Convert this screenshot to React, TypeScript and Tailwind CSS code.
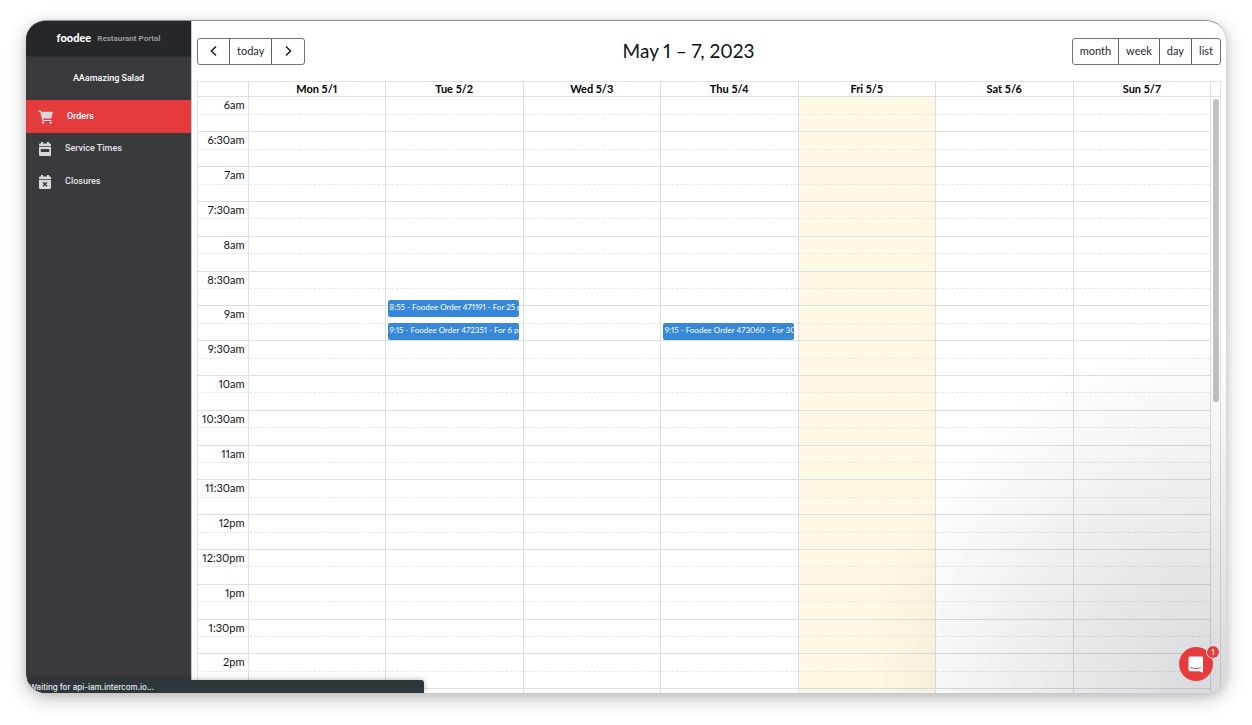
import { Fragment } from "react";

type CalendarEvent = { day: number; start: number; title: string };

const DAYS = ["Mon 5/1", "Tue 5/2", "Wed 5/3", "Thu 5/4", "Fri 5/5", "Sat 5/6", "Sun 5/7"];
const TODAY = 4;
const FIRST_MINUTE = 6 * 60;
const HALF_HOURS = 34;

const EVENTS: CalendarEvent[] = [
  { day: 1, start: 8 * 60 + 55, title: "8:55 - Foodee Order 471191 - For 25 people" },
  { day: 1, start: 9 * 60 + 15, title: "9:15 - Foodee Order 472351 - For 6 people" },
  { day: 3, start: 9 * 60 + 15, title: "9:15 - Foodee Order 473060 - For 30 people" },
];

// Five quarter-hour slots take 87px, so slot heights cycle between 17 and 18.
const SLOT_HEIGHTS = ["h-[17px]", "h-[17px]", "h-[18px]", "h-[17px]", "h-[18px]"];

const minuteToTop = (minute: number) => Math.round(((minute - FIRST_MINUTE) / 75) * 87);

function timeLabel(minute: number) {
  const hour = Math.floor(minute / 60);
  const rest = minute % 60;
  const suffix = hour < 12 ? "am" : "pm";
  return `${hour % 12 || 12}${rest ? `:${rest}` : ""}${suffix}`;
}

function CartIcon() {
  return (
    <svg viewBox="0 0 15 14" className="h-[14px] w-[15px] fill-[#d8d8dc]" aria-hidden="true">
      <path d="M0 .5h3l.5 1.200H15L13.200 8.600H5.100l.4 1.300h8v1.200H4.500L2.100 1.700H0z" />
      <circle cx="5" cy="12.600" r="1.200" />
      <circle cx="12.600" cy="12.600" r="1.200" />
    </svg>
  );
}

function CalendarBarIcon() {
  return (
    <svg viewBox="0 0 24 28" className="h-[14px] w-3" aria-hidden="true">
      <path fill="#d8d8dc" d="M4 0h4v3h8V0h4v3h2a2 2 0 0 1 2 2v3.500H0V5a2 2 0 0 1 2-2h2z" />
      <path
        fill="#d8d8dc"
        fillRule="evenodd"
        d="M0 10h24v15.500a2.500 2.500 0 0 1-2.500 2.500h-19A2.500 2.500 0 0 1 0 25.500zM3.500 14v6h17v-6z"
      />
    </svg>
  );
}

function CalendarCrossIcon() {
  return (
    <svg viewBox="0 0 24 28" className="h-[14px] w-3" aria-hidden="true">
      <path fill="#d8d8dc" d="M4 0h4v3h8V0h4v3h2a2 2 0 0 1 2 2v3.500H0V5a2 2 0 0 1 2-2h2z" />
      <path fill="#d8d8dc" d="M0 10h24v15.500a2.500 2.500 0 0 1-2.500 2.500h-19A2.500 2.500 0 0 1 0 25.500z" />
      <path d="m8 14.500 8 8m0-8-8 8" stroke="#3a393e" strokeWidth="2.800" fill="none" />
    </svg>
  );
}

function Chevron({ d }: { d: string }) {
  return (
    <svg viewBox="0 0 12 12" className="size-3 fill-none stroke-[#23282f] stroke-[1.6]" aria-hidden="true">
      <path d={d} />
    </svg>
  );
}

function Sidebar() {
  return (
    <aside className="flex w-[165px] shrink-0 flex-col bg-[#3a393e] font-['Roboto',sans-serif] text-[9px] font-medium text-[#e4e4e7]">
      <div className="flex h-9 items-center justify-center gap-1.5 border-b border-[#303136] bg-[#25272a]">
        <span className="font-['Lato',sans-serif] text-[11px] font-black text-white">foodee</span>
        <span className="text-[8px] font-bold text-[#97999d]">Restaurant Portal</span>
      </div>
      <div className="flex h-[43px] items-center justify-center text-white">AAamazing Salad</div>
      <nav>
        <a href="#orders" className="flex h-[33px] items-center gap-3.5 bg-[#e53b3d] px-3 text-white">
          <CartIcon />
          Orders
        </a>
        <a href="#service-times" className="flex h-8 items-center gap-3.5 px-[13px]">
          <CalendarBarIcon />
          Service Times
        </a>
        <a href="#closures" className="flex h-[33px] items-center gap-3.5 px-[13px]">
          <CalendarCrossIcon />
          Closures
        </a>
      </nav>
    </aside>
  );
}

function Toolbar() {
  const group =
    "flex h-[27px] divide-x divide-[#5d616b] overflow-hidden rounded-[3px] border border-[#6f737e] text-[11px] text-[#23282f]";
  return (
    <header className="flex items-center justify-between">
      <div className={group}>
        <button type="button" aria-label="Previous week" className="flex w-8 items-center justify-center">
          <Chevron d="M8 1.500 3.500 6 8 10.500" />
        </button>
        <button type="button" className="px-[7px]">
          today
        </button>
        <button type="button" aria-label="Next week" className="flex w-8 items-center justify-center">
          <Chevron d="M4 1.500 8.500 6 4 10.500" />
        </button>
      </div>
      <h1 className="text-[19px] leading-7 text-[#111]">May 1 – 7, 2023</h1>
      <div className={group}>
        {["month", "week", "day", "list"].map((view) => (
          <button key={view} type="button" className="px-[7px]">
            {view}
          </button>
        ))}
      </div>
    </header>
  );
}

function Columns() {
  return (
    <colgroup>
      <col className="w-[50px]" />
      {DAYS.map((day) => (
        <col key={day} />
      ))}
    </colgroup>
  );
}

function WeekGrid() {
  return (
    <section className="flex min-h-0 flex-1 flex-col border-x border-t border-[#e1e2e5] text-[11px] text-[#111]">
      <div className="flex border-b border-[#dddee1]">
        <div className="flex-1">
          <table className="w-full table-fixed border-collapse">
            <Columns />
            <thead>
              <tr className="h-[14px] leading-[14px]">
                <td className="border-r border-[#dddee1]" />
                {DAYS.map((day) => (
                  <th key={day} scope="col" className="border-r border-[#dddee1] p-0 font-bold text-black">
                    {day}
                  </th>
                ))}
              </tr>
            </thead>
          </table>
        </div>
        <div className="w-[9px]" />
      </div>
      <div className="flex min-h-0 flex-1">
        <div className="relative flex-1 overflow-y-auto [scrollbar-width:none]">
          <table className="w-full table-fixed border-collapse">
            <Columns />
            <tbody>
              {Array.from({ length: HALF_HOURS }, (_, i) => (
                <Fragment key={i}>
                  <tr className={SLOT_HEIGHTS[(2 * i) % 5]}>
                    <th
                      scope="row"
                      className="border-r border-b border-[#e1e2e5] border-b-[#efeff1] p-0 pr-[3px] text-right leading-4 font-normal"
                    >
                      {timeLabel(FIRST_MINUTE + i * 30)}
                    </th>
                    {DAYS.map((day, d) => (
                      <td
                        key={day}
                        className={
                          d === TODAY
                            ? "border-r border-b border-[#dddee1] border-b-[#ebe9df] bg-[#fdf8e3] [border-bottom-style:dashed]"
                            : "border-r border-b border-[#dddee1] border-b-[#e8e9eb] [border-bottom-style:dashed]"
                        }
                      />
                    ))}
                  </tr>
                  <tr className={SLOT_HEIGHTS[(2 * i + 1) % 5]}>
                    <td className="border-r border-b border-[#dddee1]" />
                    {DAYS.map((day, d) => (
                      <td
                        key={day}
                        className={
                          d === TODAY
                            ? "border-r border-b border-[#dddee1] bg-[#fdf8e3]"
                            : "border-r border-b border-[#dddee1]"
                        }
                      />
                    ))}
                  </tr>
                </Fragment>
              ))}
            </tbody>
          </table>
          <div className="absolute inset-x-0 top-0 grid grid-cols-[50px_repeat(7,minmax(0,1fr))]">
            <div />
            {DAYS.map((day, d) => (
              <div key={day} className="relative">
                {EVENTS.filter((event) => event.day === d).map((event) => (
                  <a
                    key={event.title}
                    href="#order"
                    className="absolute right-1 left-0.5 h-[17px] overflow-hidden rounded-[2px] bg-[#3788d8] px-0.5 text-[8px] leading-[14px] whitespace-nowrap text-white"
                    style={{ top: minuteToTop(event.start) }}
                  >
                    {event.title}
                  </a>
                ))}
              </div>
            ))}
          </div>
        </div>
        <div className="w-[9px] pt-0.5 pr-px pl-0.5">
          <div className="h-[51%] rounded-full bg-[#bfc1c5]" />
        </div>
      </div>
    </section>
  );
}

function ChatLauncher() {
  return (
    <>
      <div className="pointer-events-none absolute right-0 bottom-0 size-[400px] bg-[radial-gradient(ellipse_at_bottom_right,rgba(29,39,54,0.18)_0%,rgba(29,39,54,0)_64%)]" />
      <button
        type="button"
        aria-label="Open chat, 1 unread message"
        className="absolute right-[13px] bottom-3 flex size-[34px] items-center justify-center rounded-full bg-[#e53b3d]"
      >
        <svg viewBox="0 0 16 17" className="h-[17px] w-4" aria-hidden="true">
          <path fill="#fff" d="M2 .5h12a1 1 0 0 1 1 1V16.700l-3.600-1.400H2A1.500 1.500 0 0 1 .5 13.800V2A1.500 1.500 0 0 1 2 .5z" />
          <path fill="none" stroke="#e53b3d" strokeWidth="1" strokeLinecap="round" d="M3 11.200c3 2 6.500 2 9.500 0" />
        </svg>
        <span className="absolute -top-px -right-1.5 flex size-3 items-center justify-center rounded-full bg-[#e53b3d] font-['Inter',sans-serif] text-[8px] font-medium text-white outline outline-[#dcdfe2]">
          1
        </span>
      </button>
    </>
  );
}

export default function App() {
  return (
    <div className="h-screen bg-white px-[26px] pt-5 pb-8 font-['Lato',sans-serif] proportional-nums">
      <div className="h-full rounded-[20px] shadow-[0_6px_20px_rgba(0,0,0,0.22),0_2px_8px_rgba(0,0,0,0.12)]">
        <div className="relative flex h-full overflow-hidden rounded-[20px] border-t border-[#8b8f98] bg-white">
          <Sidebar />
          <main className="flex min-w-0 flex-1 flex-col gap-4 border-l border-[#c9cacd] pt-4 pr-[5px] pl-[5px]">
            <Toolbar />
            <WeekGrid />
          </main>
          <div className="absolute bottom-0 left-0 h-[13px] w-[398px] rounded-tr-[3px] bg-[#2c363b] px-[3px] font-['Inter',sans-serif] text-[8px] leading-[14px] font-medium text-[#e8eaeb] shadow-[0_0_6px_rgba(0,0,0,0.3)]">
            Waiting for api-iam.intercom.io...
          </div>
          <ChatLauncher />
        </div>
      </div>
    </div>
  );
}
